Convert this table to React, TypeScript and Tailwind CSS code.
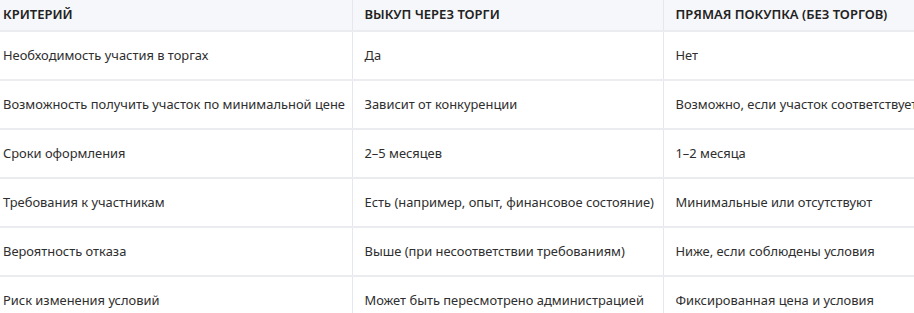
const rows: [string, string, string][] = [
  ["Необходимость участия в торгах", "Да", "Нет"],
  [
    "Возможность получить участок по минимальной цене",
    "Зависит от конкуренции",
    "Возможно, если участок соответствует требованиям",
  ],
  ["Сроки оформления", "2–5 месяцев", "1–2 месяца"],
  [
    "Требования к участникам",
    "Есть (например, опыт, финансовое состояние)",
    "Минимальные или отсутствуют",
  ],
  [
    "Вероятность отказа",
    "Выше (при несоответствии требованиям)",
    "Ниже, если соблюдены условия",
  ],
  [
    "Риск изменения условий",
    "Может быть пересмотрено администрацией",
    "Фиксированная цена и условия",
  ],
];

export default function App() {
  return (
    <div className="w-[914px] h-[313px] overflow-hidden bg-white font-['Noto_Sans',sans-serif]">
      <table className="-ml-[9px] border-collapse table-fixed w-[1100px] text-[12.9px] text-[#2e2e2e]">
        <colgroup>
          <col className="w-[361px]" />
          <col className="w-[311px]" />
          <col className="w-[428px]" />
        </colgroup>
        <thead>
          <tr className="h-[31px] bg-[#f6f7fa] border-b-2 border-[#ebecf0]">
            <th className="px-3 text-left text-[13px] font-semibold text-[#222]">КРИТЕРИЙ</th>
            <th className="px-3 text-left text-[13px] font-semibold text-[#222] border-l border-[#e6e7ee]">
              ВЫКУП ЧЕРЕЗ ТОРГИ
            </th>
            <th className="px-3 text-left text-[13px] font-semibold text-[#222] border-l border-[#e6e7ee]">
              ПРЯМАЯ ПОКУПКА (БЕЗ ТОРГОВ)
            </th>
          </tr>
        </thead>
        <tbody>
          {rows.map((r, i) => (
            <tr key={i} className="h-[49px] border-b-2 border-[#ebecf0]">
              <td className="px-3 whitespace-nowrap">{r[0]}</td>
              <td className="px-3 whitespace-nowrap border-l border-[#e6e7ee]">{r[1]}</td>
              <td className="px-3 whitespace-nowrap border-l border-[#e6e7ee]">{r[2]}</td>
            </tr>
          ))}
        </tbody>
      </table>
    </div>
  );
}
